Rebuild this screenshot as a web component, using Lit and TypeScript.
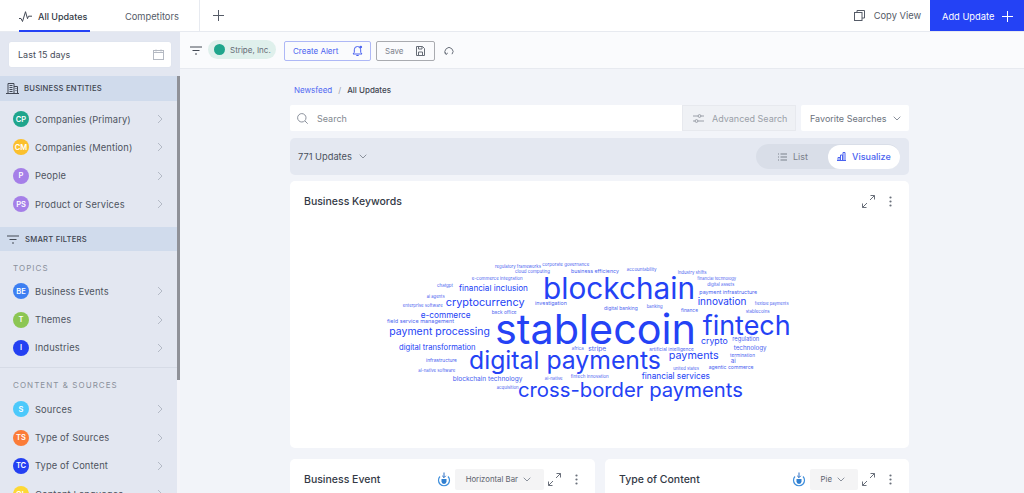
import { LitElement, html, css } from "lit";
import { customElement } from "lit/decorators.js";

const chevronRight = html`<svg class="chev" width="8" height="10" viewBox="0 0 8 10" fill="none" stroke="#b4bac6" stroke-width="1"><path d="M2 1l4 4-4 4" /></svg>`;
const chevronDown = html`<svg width="8" height="5" viewBox="0 0 8 5" fill="none" stroke="#8b919c" stroke-width="1"><path d="M.7.7L4 4 7.300.7" /></svg>`;
const filterIcon = html`<svg width="12" height="9" viewBox="0 0 12 9" fill="none" stroke="#444a55" stroke-width="1"><path d="M0 1h12M2.500 4.500h7M5 8h2" /></svg>`;
const expandIcon = html`<svg width="13" height="13" viewBox="0 0 13 13" fill="none" stroke="#6a707b" stroke-width="1"><path d="M8 5l4.500-4.500M8.500.5h4v4M5 8L.5 12.500M.5 8.500v4h4" /></svg>`;
const dotsIcon = html`<svg width="3" height="11" viewBox="0 0 3 11" fill="#6a707b"><circle cx="1.500" cy="1.500" r="1.100" /><circle cx="1.500" cy="5.500" r="1.100" /><circle cx="1.500" cy="9.500" r="1.100" /></svg>`;
const downloadIcon = html`<svg width="14" height="15" viewBox="0 0 14 15" fill="none"><path d="M3 4.500a5.500 5.500 0 1 0 8 0" stroke="#3f8fdc" stroke-width="1.200" /><path d="M4.500 7h5v2.500a2.500 2.500 0 0 1-5 0z" fill="#2f7fd0" /><path d="M7 .5v5M5.200 3.800L7 5.600l1.800-1.800" stroke="#2b6fc4" stroke-width="1" /></svg>`;

const topGroups = [
  { label: "CP", name: "Companies (Primary)", color: "#1fa58c" },
  { label: "CM", name: "Companies (Mention)", color: "#fbc02d" },
  { label: "P", name: "People", color: "#a57fe8" },
  { label: "PS", name: "Product or Services", color: "#a57fe8" },
];
const topics = [
  { label: "BE", name: "Business Events", color: "#3d7ff2" },
  { label: "T", name: "Themes", color: "#8cc653" },
  { label: "I", name: "Industries", color: "#2440f2" },
];
const sources = [
  { label: "S", name: "Sources", color: "#4cc9fb" },
  { label: "TS", name: "Type of Sources", color: "#fb7c38" },
  { label: "TC", name: "Type of Content", color: "#2440f2" },
  { label: "CL", name: "Content Languages", color: "#fdd835" },
];

// [text, left, centre y, width] relative to the card, font size is fitted to the width
const words: [string, number, number, number][] = [
  ["stablecoin", 205, 149, 201],
  ["blockchain", 253, 108, 152],
  ["fintech", 412.700, 144, 88],
  ["digital payments", 179, 179, 192],
  ["cross-border payments", 228, 209, 225],
  ["cryptocurrency", 155.700, 121.300, 79],
  ["financial inclusion", 169, 107.300, 69],
  ["e-commerce", 130.700, 134, 50],
  ["payment processing", 99.300, 151.300, 100.700],
  ["digital transformation", 109, 166.700, 76.700],
  ["blockchain technology", 162.700, 197.700, 70],
  ["innovation", 407.700, 120.700, 48.700],
  ["payments", 378.700, 175, 50],
  ["crypto", 411, 159.700, 26.700],
  ["financial services", 351.700, 195, 68.300],
  ["stripe", 298.300, 168.300, 18],
  ["technology", 443.700, 167.300, 33],
  ["regulation", 442.300, 158.300, 27],
  ["payment infrastructure", 409.300, 112, 58],
  ["agentic commerce", 418.700, 187, 45],
  ["investigation", 245, 123.300, 32],
  ["field service management", 97, 141.300, 67],
  ["digital banking", 314, 127.300, 33.700],
  ["regulatory frameworks", 205, 86, 46],
  ["corporate governance", 252.300, 84.300, 47],
  ["cloud computing", 225, 91.300, 35],
  ["business efficiency", 281, 90.700, 48],
  ["accountability", 336.700, 89.300, 30],
  ["industry shifts", 387.700, 92.300, 29],
  ["financial technology", 407.300, 98.300, 39],
  ["digital assets", 417.300, 104.300, 27],
  ["e-commerce integration", 181.700, 97.700, 51],
  ["chatgpt", 147, 104.700, 16],
  ["ai agents", 136.700, 115.700, 18],
  ["enterprise software", 112.700, 125, 40],
  ["back office", 201.700, 130.700, 25],
  ["banking", 356.700, 126.300, 16],
  ["finance", 391, 129.300, 17],
  ["flexible payments", 464.700, 123.300, 34],
  ["stablecoins", 455.700, 130.700, 24],
  ["artificial intelligence", 359.300, 168, 44.700],
  ["termination", 440, 173.700, 25],
  ["ai", 440.700, 180.300, 5],
  ["united states", 383.300, 188.300, 25.700],
  ["africa", 281.700, 167.700, 12],
  ["infrastructure", 136, 178.700, 31],
  ["ai-native software", 128.300, 190, 37],
  ["ai-native", 254.700, 197.700, 18],
  ["fintech innovation", 280.700, 196, 38],
  ["acquisition", 206.700, 206.700, 22],
];

const ruler = document.createElement("canvas").getContext("2d")!;
ruler.font = "100px Inter";
const fitSize = (text: string, width: number) => (width / ruler.measureText(text).width) * 100;

@customElement("app-root")
export class AppRoot extends LitElement {
  static styles = css`
    :host {
      display: block;
      height: 100vh;
      overflow: hidden;
      font-family: Inter, "Noto Sans", sans-serif;
      color: #434955;
      background: #f2f4f9;
    }
    svg {
      display: block;
      flex: none;
    }
    .top {
      height: 32px;
      display: flex;
      align-items: stretch;
      background: #fff;
      border-bottom: 1px solid #e7eaf0;
      box-sizing: border-box;
      font-size: 9.300px;
    }
    .tab {
      display: flex;
      align-items: center;
      gap: 6px;
      box-sizing: border-box;
      height: 32px;
      white-space: nowrap;
    }
    .tab.active {
      margin-left: 19px;
      width: 71px;
      color: #333945;
      font-weight: 500;
      font-size: 9px;
      border-bottom: 2px solid #2442f5;
      padding-top: 2px;
    }
    .tab.other {
      margin-left: 35px;
      color: #555b67;
      padding-right: 20px;
    }
    .add-tab {
      width: 38px;
      display: flex;
      align-items: center;
      justify-content: center;
      border-left: 1px solid #e7eaf0;
    }
    .spacer {
      flex: 1;
    }
    .copy {
      display: flex;
      align-items: center;
      gap: 9px;
      color: #555b67;
      margin-right: 9px;
      padding-bottom: 1px;
    }
    .add-update {
      width: 94px;
      background: #2442f5;
      color: #fff;
      display: flex;
      align-items: center;
      justify-content: space-between;
      box-sizing: border-box;
      padding: 2px 11px 0 12px;
    }
    .body {
      display: flex;
      height: 461px;
    }
    .side {
      width: 180px;
      flex: none;
      display: flex;
      flex-direction: column;
      background: #e3e7f1;
    }
    .date-wrap {
      height: 44px;
      flex: none;
      box-sizing: border-box;
      padding: 10px 9px 0;
    }
    .date {
      height: 25px;
      background: #fff;
      border-radius: 2px;
      box-shadow: 0 0 1px #cdd3de;
      display: flex;
      align-items: center;
      justify-content: space-between;
      padding: 0 7px 0 9px;
      font-size: 9px;
      color: #474d59;
    }
    .scroller {
      flex: 1;
      display: flex;
      min-height: 0;
    }
    .list {
      flex: 1;
      overflow: hidden;
    }
    .track {
      width: 3px;
      flex: none;
      background: #f4f5f9;
    }
    .thumb {
      height: 304px;
      background: #8f9198;
    }
    .band {
      display: flex;
      align-items: center;
      background: #d0dbec;
      font-size: 7.700px;
      font-weight: 500;
      letter-spacing: 0.2px;
      color: #3e4450;
      padding-left: 6px;
      gap: 5px;
      height: 25px;
      padding-bottom: 1px;
      box-sizing: border-box;
    }
    .band.smart {
      height: 24px;
      margin-top: 9px;
      padding-left: 7px;
      padding-bottom: 0;
      gap: 6px;
    }
    .rows {
      padding-top: 4px;
    }
    .row {
      height: 28.300px;
      display: flex;
      align-items: center;
      padding-left: 13px;
      padding-right: 13px;
      gap: 6px;
      font-size: 9.300px;
      letter-spacing: 0.15px;
      color: #4e5460;
    }
    .row .name {
      flex: 1;
    }
    .badge {
      width: 16px;
      height: 16px;
      border-radius: 50%;
      color: #fff;
      display: flex;
      align-items: center;
      justify-content: center;
      font-size: 7.500px;
      font-weight: 600;
      flex: none;
      letter-spacing: 0;
    }
    .caption {
      font-size: 8px;
      letter-spacing: 1.050px;
      color: #8a909b;
      padding: 12px 0 0 13px;
      height: 10px;
    }
    .rows.topics {
      padding-top: 4px;
    }
    .rows.sources {
      padding-top: 5px;
    }
    .divider {
      border-top: 1px solid #d6dbe6;
      margin-top: 5px;
    }
    .main {
      flex: 1;
      min-width: 0;
      display: flex;
      flex-direction: column;
    }
    .toolbar {
      height: 37px;
      flex: none;
      box-sizing: border-box;
      background: #fafbfd;
      border-bottom: 1px solid #e7eaf0;
      display: flex;
      align-items: center;
      padding-left: 10px;
      font-size: 8px;
    }
    .chip {
      margin-left: 6px;
      width: 68px;
      height: 19px;
      box-sizing: border-box;
      border-radius: 10px;
      background: #dff0ec;
      display: flex;
      align-items: center;
      gap: 5px;
      padding-left: 6px;
      color: #666c76;
      font-size: 8px;
      margin-top: -1px;
    }
    .chip i {
      width: 11px;
      height: 11px;
      border-radius: 50%;
      background: #1fa58c;
    }
    .btn {
      height: 20px;
      margin-top: 2px;
      box-sizing: border-box;
      border-radius: 2px;
      display: flex;
      align-items: center;
      justify-content: space-between;
    }
    .btn.alert {
      margin-left: 8px;
      width: 87px;
      border: 1px solid #aeb8f6;
      color: #4a63f0;
      padding: 0 7px 0 8px;
    }
    .btn.save {
      margin-left: 5px;
      width: 59px;
      border: 1px solid #a9abb0;
      color: #7c818b;
      padding: 0 9px 0 8px;
    }
    .undo {
      margin-left: 9px;
      margin-top: 2px;
    }
    .content {
      width: 619px;
      margin-left: 110px;
    }
    .crumbs {
      height: 36px;
      box-sizing: border-box;
      padding: 16px 0 0 4px;
      font-size: 8px;
      display: flex;
      gap: 6px;
      color: #3f4551;
      font-weight: 500;
    }
    .crumbs a {
      color: #5068f2;
      font-weight: 400;
    }
    .crumbs span {
      color: #9aa0aa;
      font-weight: 400;
    }
    .search-row {
      display: flex;
      height: 26px;
      gap: 5px;
    }
    .search {
      flex: 1;
      display: flex;
      background: #fff;
      border-radius: 2px;
    }
    .search-input {
      flex: 1;
      display: flex;
      align-items: center;
      gap: 9px;
      padding-left: 7px;
      font-size: 9px;
      color: #82888f;
    }
    .advanced {
      width: 114px;
      background: #eff1f5;
      border: 1px solid #e7e9ee;
      box-sizing: border-box;
      display: flex;
      align-items: center;
      gap: 8px;
      padding-left: 10px;
      font-size: 9px;
      color: #9a9fa8;
    }
    .favorite {
      width: 108px;
      background: #fff;
      border-radius: 2px;
      display: flex;
      align-items: center;
      justify-content: space-between;
      padding: 0 8px 0 9px;
      box-sizing: border-box;
      font-size: 9px;
      color: #6d737d;
    }
    .updates {
      margin-top: 7px;
      height: 37px;
      border-radius: 5px;
      background: #e4e8f1;
      display: flex;
      align-items: center;
      justify-content: space-between;
      padding: 0 9px 0 8px;
      font-size: 9.300px;
      color: #4a505c;
    }
    .count {
      display: flex;
      align-items: center;
      gap: 7px;
    }
    .toggle {
      width: 144px;
      height: 25px;
      border-radius: 13px;
      background: #d9dee8;
      display: flex;
      align-items: center;
      justify-content: space-between;
      font-size: 9px;
      color: #7b818b;
      padding: 0 0 0 22px;
      box-sizing: border-box;
    }
    .toggle div {
      display: flex;
      align-items: center;
      gap: 6px;
    }
    .toggle .on {
      width: 72px;
      height: 24px;
      box-sizing: border-box;
      padding-left: 9px;
      border-radius: 12px;
      background: #fff;
      color: #4a63f0;
      font-weight: 500;
    }
    .card {
      background: #fff;
      border-radius: 5px;
    }
    .cloud-card {
      margin-top: 6px;
      height: 267px;
      position: relative;
    }
    .card-head {
      display: flex;
      align-items: center;
      font-size: 10.500px;
      font-weight: 500;
      color: #333945;
      height: 40px;
      padding: 0 17px 0 14px;
      gap: 14px;
    }
    .card-head .title {
      flex: 1;
    }
    .word {
      position: absolute;
      white-space: nowrap;
      transform: translateY(-50%);
      line-height: 1;
      color: #2442f5;
    }
    .word.small {
      color: #4a63f0;
    }
    .pair {
      display: grid;
      grid-template-columns: 305px 304px;
      gap: 10px;
      margin-top: 11px;
    }
    .pair .card {
      height: 60px;
    }
    .select {
      height: 21px;
      box-sizing: border-box;
      background: #f4f4f5;
      border-radius: 2px;
      display: flex;
      align-items: center;
      gap: 5px;
      padding: 0 13px 0 11px;
      font-size: 7.800px;
      font-weight: 400;
      color: #5d636e;
      margin-left: -10px;
      margin-right: -10px;
    }
  `;

  private row(r: { label: string; name: string; color: string }) {
    return html`<div class="row">
      <div class="badge" style="background:${r.color}">${r.label}</div>
      <div class="name">${r.name}</div>
      ${chevronRight}
    </div>`;
  }

  private sidebar() {
    return html`<aside class="side">
      <div class="date-wrap">
        <div class="date">
          Last 15 days
          <svg width="11" height="11" viewBox="0 0 11 11" fill="none" stroke="#b4b9c2" stroke-width="1">
            <rect x=".5" y="1.500" width="10" height="9" /><path d="M.5 3.500h10M3 .5v2M8 .5v2" />
          </svg>
        </div>
      </div>
      <div class="scroller">
        <div class="list">
          <div class="band">
            <svg width="13" height="11" viewBox="0 0 13 11" fill="none" stroke="#434955" stroke-width="1">
              <path d="M2 10.500V.5h6v10M8 3.500h3.500v7M0 10.500h13M3.500 2.500h3M3.500 4.500h3M3.500 6.500h3M3.500 8.500h3M9.500 5.500h1M9.500 7.500h1" />
            </svg>
            BUSINESS ENTITIES
          </div>
          <div class="rows">${topGroups.map((r) => this.row(r))}</div>
          <div class="band smart">${filterIcon} SMART FILTERS</div>
          <div class="caption">TOPICS</div>
          <div class="rows topics">${topics.map((r) => this.row(r))}</div>
          <div class="divider"></div>
          <div class="caption">CONTENT &amp; SOURCES</div>
          <div class="rows sources">${sources.map((r) => this.row(r))}</div>
        </div>
        <div class="track"><div class="thumb"></div></div>
      </div>
    </aside>`;
  }

  private toolbar() {
    return html`<div class="toolbar">
      ${filterIcon}
      <div class="chip"><i></i>Stripe, Inc.</div>
      <div class="btn alert">
        Create Alert
        <svg width="11" height="12" viewBox="0 0 11 12" fill="none" stroke="#4a63f0" stroke-width="1">
          <path d="M1 9h9L8.700 7.300V4.800A3.200 3.200 0 0 0 5.500 1.500 3.200 3.200 0 0 0 2.300 4.800v2.500zM4.300 10.500h2.400" />
          <circle cx="8.800" cy="2" r="1.300" fill="#4a63f0" stroke="none" />
        </svg>
      </div>
      <div class="btn save">
        Save
        <svg width="9" height="10" viewBox="0 0 9 10" fill="none" stroke="#666c76" stroke-width="1">
          <path d="M.5.500h6l2 2v7h-8zM2.500.5v2.500h3.500V.5M2.500 9.500V6h4v3.500" />
        </svg>
      </div>
      <svg class="undo" width="10" height="10" viewBox="0 0 10 10" fill="none" stroke="#6a707b" stroke-width="1">
        <path d="M2 8.200A4 4 0 1 1 8 8.200M.5 6.500L2 8.500 3.800 7" />
      </svg>
    </div>`;
  }

  private searchRow() {
    return html`<div class="search-row">
      <div class="search">
        <div class="search-input">
          <svg width="11" height="11" viewBox="0 0 11 11" fill="none" stroke="#8b919c" stroke-width="1">
            <circle cx="4.800" cy="4.800" r="4.200" /><path d="M8 8l2.700 2.700" />
          </svg>
          Search
        </div>
        <div class="advanced">
          <svg width="11" height="9" viewBox="0 0 11 9" fill="none" stroke="#9a9fa8" stroke-width="1">
            <path d="M0 2h5M8 2h3M0 7h2M5 7h6" /><circle cx="6.500" cy="2" r="1.400" /><circle cx="3.500" cy="7" r="1.400" />
          </svg>
          Advanced Search
        </div>
      </div>
      <div class="favorite">Favorite Searches ${chevronDown}</div>
    </div>`;
  }

  private updatesBar() {
    return html`<div class="updates">
      <div class="count">771 Updates ${chevronDown}</div>
      <div class="toggle">
        <div>
          <svg width="9" height="8" viewBox="0 0 9 8" fill="none" stroke="#7b818b" stroke-width="1">
            <path d="M2.500 1H9M2.500 4H9M2.500 7H9M0 1h1M0 4h1M0 7h1" />
          </svg>
          List
        </div>
        <div class="on">
          <svg width="9" height="9" viewBox="0 0 9 9" fill="none" stroke="#4a63f0" stroke-width="1">
            <path d="M0 8.500h9M1 8.500V5.500h2v3M3.500 8.500V3h2v5.500M6 8.500V.5h2v8" />
          </svg>
          Visualize
        </div>
      </div>
    </div>`;
  }

  private cloud() {
    return words.map(([t, x, y, w]) => {
      const size = fitSize(t, w);
      return html`<span
        class="word ${size < 7 ? "small" : ""}"
        style="left:${x}px;top:${y}px;font-size:${size}px"
        >${t}</span
      >`;
    });
  }

  render() {
    return html`
      <header class="top">
        <div class="tab active">
          <svg width="13" height="11" viewBox="0 0 13 11" fill="none" stroke="#434955" stroke-width="1">
            <path d="M0 7.500h2l1.500 3L6.500.7l2 7 1-2.500H13" />
          </svg>
          All Updates
        </div>
        <div class="tab other">Competitors</div>
        <div class="add-tab">
          <svg width="11" height="11" viewBox="0 0 11 11" stroke="#555b67" stroke-width="1"><path d="M5.500 0v11M0 5.500h11" /></svg>
        </div>
        <div class="spacer"></div>
        <div class="copy">
          <svg width="11" height="11" viewBox="0 0 11 11" fill="none" stroke="#555b67" stroke-width="1">
            <rect x=".5" y="2.500" width="7.500" height="8" /><path d="M3 2.500V.5h7.500v7.500H8" />
          </svg>
          Copy View
        </div>
        <div class="add-update">
          Add Update
          <svg width="11" height="11" viewBox="0 0 11 11" stroke="#fff" stroke-width="1"><path d="M5.500 0v11M0 5.500h11" /></svg>
        </div>
      </header>
      <div class="body">
        ${this.sidebar()}
        <main class="main">
          ${this.toolbar()}
          <div class="content">
            <div class="crumbs"><a>Newsfeed</a><span>/</span>All Updates</div>
            ${this.searchRow()} ${this.updatesBar()}
            <section class="card cloud-card">
              <div class="card-head">
                <div class="title">Business Keywords</div>
                ${expandIcon} ${dotsIcon}
              </div>
              ${this.cloud()}
            </section>
            <div class="pair">
              <section class="card">
                <div class="card-head">
                  <div class="title">Business Event</div>
                  ${downloadIcon}
                  <div class="select">Horizontal Bar ${chevronDown}</div>
                  ${expandIcon} ${dotsIcon}
                </div>
              </section>
              <section class="card">
                <div class="card-head">
                  <div class="title">Type of Content</div>
                  ${downloadIcon}
                  <div class="select">Pie ${chevronDown}</div>
                  ${expandIcon} ${dotsIcon}
                </div>
              </section>
            </div>
          </div>
        </main>
      </div>
    `;
  }
}
